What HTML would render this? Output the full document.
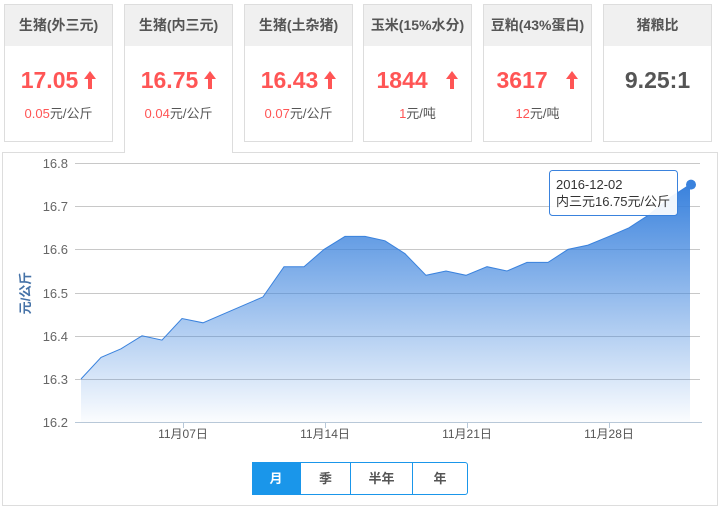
<!DOCTYPE html>
<html><head><meta charset="utf-8"><style>
*{margin:0;padding:0;box-sizing:border-box}
body{width:724px;height:512px;background:#fff;font-family:"Liberation Sans","Noto Sans CJK SC",sans-serif;position:relative;overflow:hidden}
.card{position:absolute;top:4px;width:109px;height:138px;border:1px solid #ddd;background:#fff;text-align:center}
.card .h{height:41px;background:#f0f0f0;line-height:41px;font-size:14px;font-weight:bold;color:#555}
.card .v{margin-top:21px;font-size:23px;font-weight:bold;color:#f55;height:26px;line-height:26px}
.card .v svg{margin-left:6px;vertical-align:-1px}
.card .s{margin-top:10px;font-size:13px;color:#555}
.card .s b{font-weight:normal;color:#f55}
.act{height:149px;border-bottom:none;z-index:2}
.chart{position:absolute;left:2px;top:152px;width:716px;height:354px;border:1px solid #ddd}
.btns{position:absolute;left:252px;top:462px;height:33px;width:216px;border:1px solid #1a96ea;border-radius:0 3px 3px 0;display:flex;font-size:13px;font-weight:bold;color:#555;z-index:3}
.btns div{text-align:center;line-height:31px;border-right:1px solid #1a96ea}
.btns div:last-child{border-right:none}
</style></head><body>
<div class="card" style="left:4px"><div class="h">生猪(外三元)</div><div class="v">17.05<svg width="12" height="18" viewBox="0 0 12 18"><path d="M6 0 L12 8 L8 8 L8 18 L4 18 L4 8 L0 8 Z" fill="#f55"/></svg></div><div class="s"><b>0.05</b>元/公斤</div></div>
<div class="card act" style="left:124px"><div class="h">生猪(内三元)</div><div class="v">16.75<svg width="12" height="18" viewBox="0 0 12 18"><path d="M6 0 L12 8 L8 8 L8 18 L4 18 L4 8 L0 8 Z" fill="#f55"/></svg></div><div class="s"><b>0.04</b>元/公斤</div></div>
<div class="card" style="left:244px"><div class="h">生猪(土杂猪)</div><div class="v">16.43<svg width="12" height="18" viewBox="0 0 12 18"><path d="M6 0 L12 8 L8 8 L8 18 L4 18 L4 8 L0 8 Z" fill="#f55"/></svg></div><div class="s"><b>0.07</b>元/公斤</div></div>
<div class="card" style="left:363px"><div class="h">玉米(15%水分)</div><div class="v">1844 &nbsp;<svg width="12" height="18" viewBox="0 0 12 18"><path d="M6 0 L12 8 L8 8 L8 18 L4 18 L4 8 L0 8 Z" fill="#f55"/></svg></div><div class="s"><b>1</b>元/吨</div></div>
<div class="card" style="left:483px"><div class="h">豆粕(43%蛋白)</div><div class="v">3617 &nbsp;<svg width="12" height="18" viewBox="0 0 12 18"><path d="M6 0 L12 8 L8 8 L8 18 L4 18 L4 8 L0 8 Z" fill="#f55"/></svg></div><div class="s"><b>12</b>元/吨</div></div>
<div class="card" style="left:603px"><div class="h">猪粮比</div><div class="v" style="color:#555">9.25:1</div></div>
<div class="chart"></div>
<svg style="position:absolute;left:0;top:0" width="724" height="512">
<defs><linearGradient id="g" x1="0" y1="0" x2="0" y2="1"><stop offset="0" stop-color="#3a82dd"/><stop offset="1" stop-color="#3a82dd" stop-opacity="0.02"/></linearGradient></defs>
<g stroke="#c8c8c8" stroke-width="1">
<line x1="75" y1="163.5" x2="700" y2="163.5"/><line x1="75" y1="206.5" x2="700" y2="206.5"/><line x1="75" y1="249.5" x2="700" y2="249.5"/><line x1="75" y1="293.5" x2="700" y2="293.5"/><line x1="75" y1="336.5" x2="700" y2="336.5"/><line x1="75" y1="379.5" x2="700" y2="379.5"/></g>
<path d="M81,379 L101,357.4 L121,348.8 L142,335.8 L162,340.1 L182,318.5 L203,322.8 L223,314.2 L243,305.6 L263,296.9 L284,266.7 L304,266.7 L324,249.4 L345,236.4 L365,236.4 L385,240.8 L405,253.7 L426,275.3 L446,271 L466,275.3 L487,266.7 L507,271 L527,262.4 L548,262.4 L568,249.4 L588,245.1 L609,236.4 L629,227.8 L649,214.8 L670,197.6 L690,184.6 L690,422 L81,422 Z" fill="url(#g)"/>
<path d="M81,379 L101,357.4 L121,348.8 L142,335.8 L162,340.1 L182,318.5 L203,322.8 L223,314.2 L243,305.6 L263,296.9 L284,266.7 L304,266.7 L324,249.4 L345,236.4 L365,236.4 L385,240.8 L405,253.7 L426,275.3 L446,271 L466,275.3 L487,266.7 L507,271 L527,262.4 L548,262.4 L568,249.4 L588,245.1 L609,236.4 L629,227.8 L649,214.8 L670,197.6 L690,184.6" fill="none" stroke="#3a82dd" stroke-width="1"/>
<line x1="75" y1="422.5" x2="702" y2="422.5" stroke="#b8c8d8"/>
<g stroke="#b8c8d8"><line x1="183.5" y1="422" x2="183.5" y2="428"/><line x1="325.5" y1="422" x2="325.5" y2="428"/><line x1="467.5" y1="422" x2="467.5" y2="428"/><line x1="609.5" y1="422" x2="609.5" y2="428"/></g>
<g font-size="13" fill="#666" text-anchor="end" font-family="Liberation Sans, sans-serif">
<text x="68" y="168">16.8</text><text x="68" y="211">16.7</text><text x="68" y="254">16.6</text><text x="68" y="298">16.5</text><text x="68" y="341">16.4</text><text x="68" y="384">16.3</text><text x="68" y="427">16.2</text></g>
<g font-size="12" fill="#555" text-anchor="middle" font-family="Liberation Sans, Noto Sans CJK SC, sans-serif">
<text x="183" y="438">11月07日</text><text x="325" y="438">11月14日</text><text x="467" y="438">11月21日</text><text x="609" y="438">11月28日</text></g>
<text transform="translate(30,293) rotate(-90)" text-anchor="middle" font-size="13" font-weight="bold" fill="#4572a7" font-family="Liberation Sans, Noto Sans CJK SC, sans-serif">元/公斤</text>
<rect x="549.5" y="170.5" width="128" height="45" rx="3" fill="#fff" fill-opacity="0.92" stroke="#3a82dd"/>
<text x="556" y="189" font-size="13" fill="#333" font-family="Liberation Sans, Noto Sans CJK SC, sans-serif">2016-12-02</text>
<text x="556" y="206" font-size="13" fill="#333" font-family="Liberation Sans, Noto Sans CJK SC, sans-serif">内三元16.75元/公斤</text>
<circle cx="691" cy="184.6" r="5" fill="#3a82dd"/>
</svg>
<div class="btns"><div style="width:49px;background:#1a96ea;color:#fff;margin:-1px 0 -1px -1px;line-height:33px">月</div><div style="width:50px">季</div><div style="width:62px">半年</div><div style="width:54px">年</div></div>
</body></html>
